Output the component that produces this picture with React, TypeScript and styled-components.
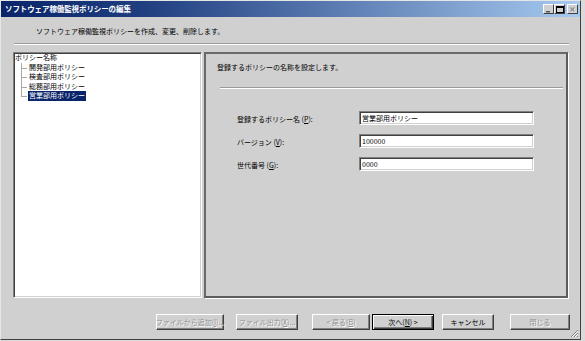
import React from "react";
import styled, { createGlobalStyle } from "styled-components";

const FONT = `"Noto Sans CJK JP", "Noto Sans CJK SC", "Noto Sans", sans-serif`;

const GlobalStyle = createGlobalStyle`
  html, body { margin: 0; padding: 0; background: #dadada; }
  body { font-family: ${FONT}; }
  * { box-sizing: border-box; }
`;

const Window = styled.div`
  position: relative;
  width: 581px;
  height: 340px;
  background: #d0d0d0;
  border: 1px solid;
  border-color: #e6e6e6 #404040 #404040 #e6e6e6;
  display: flex;
  flex-direction: column;
  font-family: ${FONT};
  font-size: 7px;
  line-height: 10px;
  color: #000;
`;

const TitleBar = styled.div`
  height: 16px;
  background: linear-gradient(to right, #0a246a 0%, #1f3f80 25%, #a6caf0 100%);
  display: flex;
  align-items: center;
  justify-content: space-between;
  padding: 0 2px 0 4px;
`;

const TitleText = styled.span`
  color: #fff;
  font-weight: bold;
  font-size: 7.5px;
  letter-spacing: -0.1px;
`;

const CaptionGroup = styled.div`
  display: flex;
  align-items: center;
`;

const CaptionButton = styled.div<{ $gap?: boolean }>`
  width: 11px;
  height: 10px;
  margin-left: ${(p) => (p.$gap ? "2px" : "0")};
  background: #d0d0d0;
  border: 1px solid;
  border-color: #fff #404040 #404040 #fff;
  display: flex;
  align-items: center;
  justify-content: center;
`;

const Header = styled.div`
  height: 26px;
  display: flex;
  align-items: center;
  padding: 2px 0 0 35px;
`;

const Etched = styled.div<{ $ml: number; $mr: number; $mt?: number }>`
  height: 2px;
  margin: ${(p) => p.$mt ?? 0}px ${(p) => p.$mr}px 0 ${(p) => p.$ml}px;
  border-top: 1px solid #9a9a9a;
  border-bottom: 1px solid #ffffff;
`;

const Body = styled.div`
  margin-top: 7px;
  height: 246px;
  padding: 0 12px;
  display: flex;
  gap: 2px;
`;

const TreePanel = styled.div`
  width: 189px;
  height: 100%;
  background: #fff;
  border: 1px solid;
  border-color: #808080 #fff #fff #808080;
  box-shadow: inset 1px 1px 0 #404040, inset -1px -1px 0 #d0d0d0;
  padding: 0 0 0 1px;
`;

const TreeRoot = styled.div`
  height: 9.5px;
  line-height: 9.5px;
  white-space: nowrap;
`;

const TreeChildren = styled.div`
  padding-left: 13px;
`;

const TreeItem = styled.div<{ $last?: boolean }>`
  position: relative;
  height: 9.5px;
  line-height: 9.5px;
  white-space: nowrap;
  &::before {
    content: "";
    position: absolute;
    left: -7px;
    top: 0;
    height: ${(p) => (p.$last ? "5px" : "9.5px")};
    border-left: 1px solid #a8a8a8;
  }
  &::after {
    content: "";
    position: absolute;
    left: -7px;
    top: 5px;
    width: 6px;
    border-top: 1px solid #a8a8a8;
  }
`;

const ItemLabel = styled.span<{ $selected?: boolean }>`
  display: inline-block;
  padding: 0 1px;
  background: ${(p) => (p.$selected ? "#0a246a" : "transparent")};
  color: ${(p) => (p.$selected ? "#fff" : "#000")};
`;

const ContentPanel = styled.div`
  width: 364px;
  height: 100%;
  border: 2px solid #5c5c5c;
  border-top-color: #6a6a6a;
  border-left-color: #6a6a6a;
  box-shadow: 1px 1px 0 #ffffff;
  display: flex;
  flex-direction: column;
`;

const PanelTitle = styled.div`
  padding: 8px 0 0 11px;
  height: 18px;
`;

const Form = styled.div`
  margin-top: 22px;
  padding-left: 31px;
  display: grid;
  grid-template-columns: 122px 175px;
  row-gap: 9px;
  align-items: center;
`;

const FieldLabel = styled.div`
  white-space: nowrap;
  padding-top: 1px;
`;

const TextBox = styled.div`
  height: 14px;
  background: #fff;
  border: 1px solid;
  border-color: #808080 #fff #fff #808080;
  box-shadow: inset 1px 1px 0 #404040, inset -1px -1px 0 #d0d0d0;
  padding: 0 2px;
  line-height: 12px;
  white-space: nowrap;
  overflow: hidden;
  color: #000;
`;

const U = styled.span`
  text-decoration: underline;
`;

const Footer = styled.div`
  margin-top: 16px;
  height: 16px;
  padding-left: 155px;
  display: flex;
`;

const Button = styled.div<{ $w: number; $ml?: number; $disabled?: boolean; $default?: boolean }>`
  width: ${(p) => p.$w}px;
  height: 16px;
  margin-left: ${(p) => p.$ml ?? 0}px;
  background: #d0d0d0;
  border: 1px solid;
  border-color: ${(p) => (p.$default ? "#000" : "#fff #404040 #404040 #fff")};
  box-shadow: ${(p) =>
    p.$default
      ? "inset 1px 1px 0 #fff, inset -1px -1px 0 #404040, inset -2px -2px 0 #808080"
      : "inset -1px -1px 0 #808080"};
  display: flex;
  align-items: center;
  justify-content: center;
  white-space: nowrap;
  line-height: 10px;
  color: ${(p) => (p.$disabled ? "#909090" : "#000")};
  text-shadow: ${(p) => (p.$disabled ? "1px 1px 0 #fff" : "none")};
`;

const Grip = styled.svg`
  position: absolute;
  right: 1px;
  bottom: 1px;
`;

const treeItems = ["開発部用ポリシー", "検査部用ポリシー", "総務部用ポリシー", "営業部用ポリシー"];

export default function App() {
  return (
    <>
      <GlobalStyle />
      <Window>
        <TitleBar>
          <TitleText>ソフトウェア稼働監視ポリシーの編集</TitleText>
          <CaptionGroup>
            <CaptionButton>
              <svg width="7" height="7" viewBox="0 0 7 7">
                <rect x="1" y="5" width="4" height="1.5" fill="#555" />
              </svg>
            </CaptionButton>
            <CaptionButton>
              <svg width="8" height="7" viewBox="0 0 8 7">
                <rect x="0.5" y="0.5" width="7" height="6" fill="none" stroke="#000" />
                <rect x="0.5" y="0.5" width="7" height="1.5" fill="#000" />
              </svg>
            </CaptionButton>
            <CaptionButton $gap>
              <svg width="7" height="7" viewBox="0 0 7 7">
                <path d="M1.5 1.5 L5.5 5.5 M5.5 1.5 L1.5 5.5" stroke="#fff" strokeWidth="1.2" transform="translate(0.6,0.6)" />
                <path d="M1.5 1.5 L5.5 5.5 M5.5 1.5 L1.5 5.5" stroke="#8a8a8a" strokeWidth="1.2" />
              </svg>
            </CaptionButton>
          </CaptionGroup>
        </TitleBar>

        <Header>ソフトウェア稼働監視ポリシーを作成、変更、削除します。</Header>
        <Etched $ml={13} $mr={11} />

        <Body>
          <TreePanel>
            <TreeRoot>ポリシー名称</TreeRoot>
            <TreeChildren>
              {treeItems.map((t, i) => (
                <TreeItem key={t} $last={i === treeItems.length - 1}>
                  <ItemLabel $selected={i === treeItems.length - 1}>{t}</ItemLabel>
                </TreeItem>
              ))}
            </TreeChildren>
          </TreePanel>

          <ContentPanel>
            <PanelTitle>登録するポリシーの名称を設定します。</PanelTitle>
            <Etched $ml={14} $mr={3} $mt={15} />
            <Form>
              <FieldLabel>
                登録するポリシー名 (<U>P</U>):
              </FieldLabel>
              <TextBox>営業部用ポリシー</TextBox>
              <FieldLabel>
                バージョン (<U>V</U>):
              </FieldLabel>
              <TextBox>100000</TextBox>
              <FieldLabel>
                世代番号 (<U>G</U>):
              </FieldLabel>
              <TextBox>0000</TextBox>
            </Form>
          </ContentPanel>
        </Body>

        <Footer>
          <Button $w={68} $disabled>
            ファイルから追加(<U>I</U>)...
          </Button>
          <Button $w={62} $ml={12} $disabled>
            ファイル出力(<U>X</U>)...
          </Button>
          <Button $w={58} $ml={14} $disabled>
            &lt; 戻る(<U>B</U>)
          </Button>
          <Button $w={62} $ml={2} $default>
            次へ(<U>N</U>) &gt;
          </Button>
          <Button $w={52} $ml={8}>
            キャンセル
          </Button>
          <Button $w={60} $ml={16} $disabled>
            閉じる
          </Button>
        </Footer>

        <Grip width="10" height="10" viewBox="0 0 10 10">
          <path d="M9 2 L2 9 M9 5 L5 9 M9 8 L8 9" stroke="#808080" strokeWidth="1" />
          <path d="M9 3 L3 9 M9 6 L6 9" stroke="#fff" strokeWidth="1" />
        </Grip>
      </Window>
    </>
  );
}
